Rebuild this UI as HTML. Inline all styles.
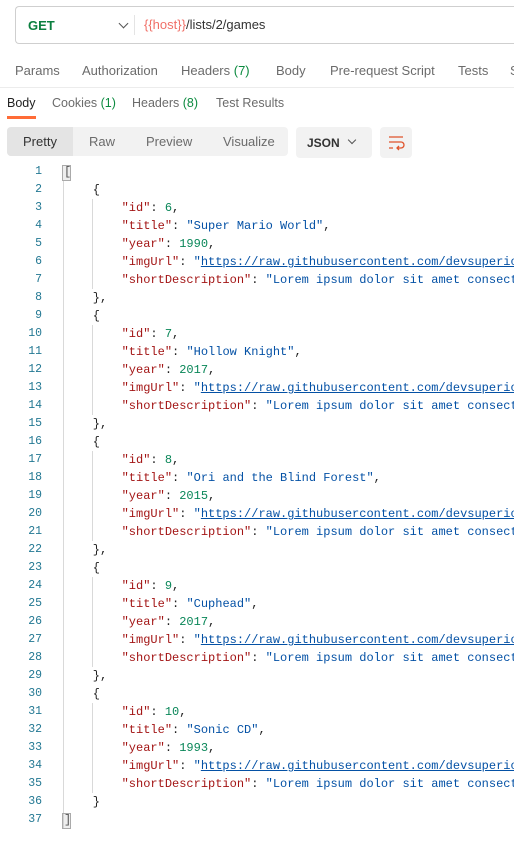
<!DOCTYPE html>
<html><head><meta charset="utf-8"><style>
html,body{margin:0;width:514px;height:853px;overflow:hidden}
body{background:#fff;font-family:"Liberation Sans",sans-serif;position:relative}
#root{position:absolute;left:0;top:0;width:514px;height:853px;overflow:hidden}
.url{position:absolute;left:15px;top:6px;width:499px;height:38px;border:1px solid #cfcfcf;border-right:none;border-radius:4px 0 0 4px;box-sizing:border-box}
.get{position:absolute;left:12px;top:11px;color:#0b7f3f;font-weight:bold;font-size:13px}
.chev{position:absolute;left:104px;top:13px;width:6px;height:6px;border-right:1.3px solid #555;border-bottom:1.3px solid #555;transform:rotate(45deg)}
.sep{position:absolute;left:118px;top:8px;width:1px;height:20px;background:#e4e4e4}
.path{position:absolute;left:128px;top:10px;font-size:13px;color:#333}
.tabs{position:absolute;left:0;top:63px;width:514px;height:20px;overflow:hidden;font-size:13px;color:#6b6b6b;white-space:nowrap}
.tabs>span{position:absolute}
.g{color:#0b8a3f}
.line{position:absolute;left:0;top:87px;width:514px;height:1px;background:#ececec}
.rt{position:absolute;top:96px;font-size:12.5px;color:#6b6b6b}
.ul{position:absolute;left:7px;top:116px;width:29px;height:3px;background:#ff6c37}
.seg{position:absolute;left:7px;top:127px;width:281px;height:29px;background:#f2f2f2;border-radius:4px}
.seg .on{position:absolute;left:0;top:0;width:66px;height:29px;background:#e4e4e4;border-radius:4px 0 0 4px}
.seg span{position:absolute;top:7px;font-size:13px;color:#6b6b6b}
.json{position:absolute;left:296px;top:127px;width:76px;height:31px;background:#f2f2f2;border-radius:4px}
.wrap{position:absolute;left:380px;top:127px;width:32px;height:31px;background:#f2f2f2;border-radius:4px}
.code{position:absolute;left:0;top:163px;font-family:"Liberation Mono",monospace;font-size:12px;line-height:18px;white-space:pre;color:#222}
.ln{position:absolute;left:0;width:42px;text-align:right;color:#237893;font-family:"Liberation Mono",monospace;font-size:11.5px}
.k{color:#a31515}.s{color:#0451a5}.n{color:#098658}.u{color:#0451a5;text-decoration:underline}
.guide{position:absolute;width:1px;background:#d9d9d9}
</style></head><body><div id="root">
<div class="url"><span class="get">GET</span><span class="chev"></span><span class="sep"></span><span class="path"><span style="color:#f07068">{{host}}</span>/lists/2/games</span></div>
<div class="tabs"><span style="left:15px">Params</span><span style="left:82px">Authorization</span><span style="left:181px">Headers <span class="g">(7)</span></span><span style="left:276px">Body</span><span style="left:330px">Pre-request Script</span><span style="left:458px">Tests</span><span style="left:510px">S</span></div>
<div class="line"></div>
<span class="rt" style="left:7px;color:#212121">Body</span><span class="rt" style="left:52px">Cookies <span class="g">(1)</span></span><span class="rt" style="left:132px">Headers <span class="g">(8)</span></span><span class="rt" style="left:216px">Test Results</span>
<div class="ul"></div>
<div class="seg"><div class="on"></div><span style="left:16px;color:#333">Pretty</span><span style="left:82px">Raw</span><span style="left:139px">Preview</span><span style="left:216px">Visualize</span></div>
<div class="json"><span style="position:absolute;left:11px;top:9px;font-size:12px;font-weight:bold;color:#333">JSON</span><span style="position:absolute;left:53px;top:10px;width:5px;height:5px;border-right:1.2px solid #555;border-bottom:1.2px solid #555;transform:rotate(45deg)"></span></div>
<div class="wrap"><svg width="32" height="31" viewBox="0 0 32 31"><g stroke="#e0532b" stroke-width="1.3" fill="none"><path d="M9 10h14M9 15h12a3 3 0 0 1 0 6h-4M19 19l-2 2 2 2M9 21h4"/></g></svg></div>
<div class="guide" style="left:63px;top:181px;height:648px"></div>
<div id="c" style="position:absolute;left:0;top:0;width:514px;height:853px;overflow:hidden"></div>
</div>
<script>
var games=[[6,"Super Mario World",1990],[7,"Hollow Knight",2017],[8,"Ori and the Blind Forest",2015],[9,"Cuphead",2017],[10,"Sonic CD",1993]];
var L=['['];
games.forEach(function(g,i){
L.push('    {');
L.push('        <span class="k">"id"</span>: <span class="n">'+g[0]+'</span>,');
L.push('        <span class="k">"title"</span>: <span class="s">"'+g[1]+'"</span>,');
L.push('        <span class="k">"year"</span>: <span class="n">'+g[2]+'</span>,');
L.push('        <span class="k">"imgUrl"</span>: <span class="s">"<span class="u">https://raw.githubusercontent.com/devsuperio</span></span>');
L.push('        <span class="k">"shortDescription"</span>: <span class="s">"Lorem ipsum dolor sit amet consect</span>');
L.push('    }'+(i<4?',':''));
});
L.push(']');
var h='';
L.forEach(function(l,i){var y=163+i*18;
h+='<div class="ln" style="top:'+y+'px;line-height:18px">'+(i+1)+'</div>';
h+='<div class="code" style="left:64px;top:'+y+'px">'+l+'</div>';
if(l.indexOf('    {')===0)h+='<div class="guide" style="left:92px;top:'+(y+18)+'px;height:90px"></div>';
});
h+='<div style="position:absolute;left:62px;top:165px;width:7px;height:14px;border:1px solid #aaa;background:rgba(200,200,200,.3)"></div>';
h+='<div style="position:absolute;left:62px;top:813px;width:7px;height:14px;border:1px solid #aaa;background:rgba(200,200,200,.3)"></div>';
document.getElementById('c').innerHTML=h;
</script>
</body></html>
